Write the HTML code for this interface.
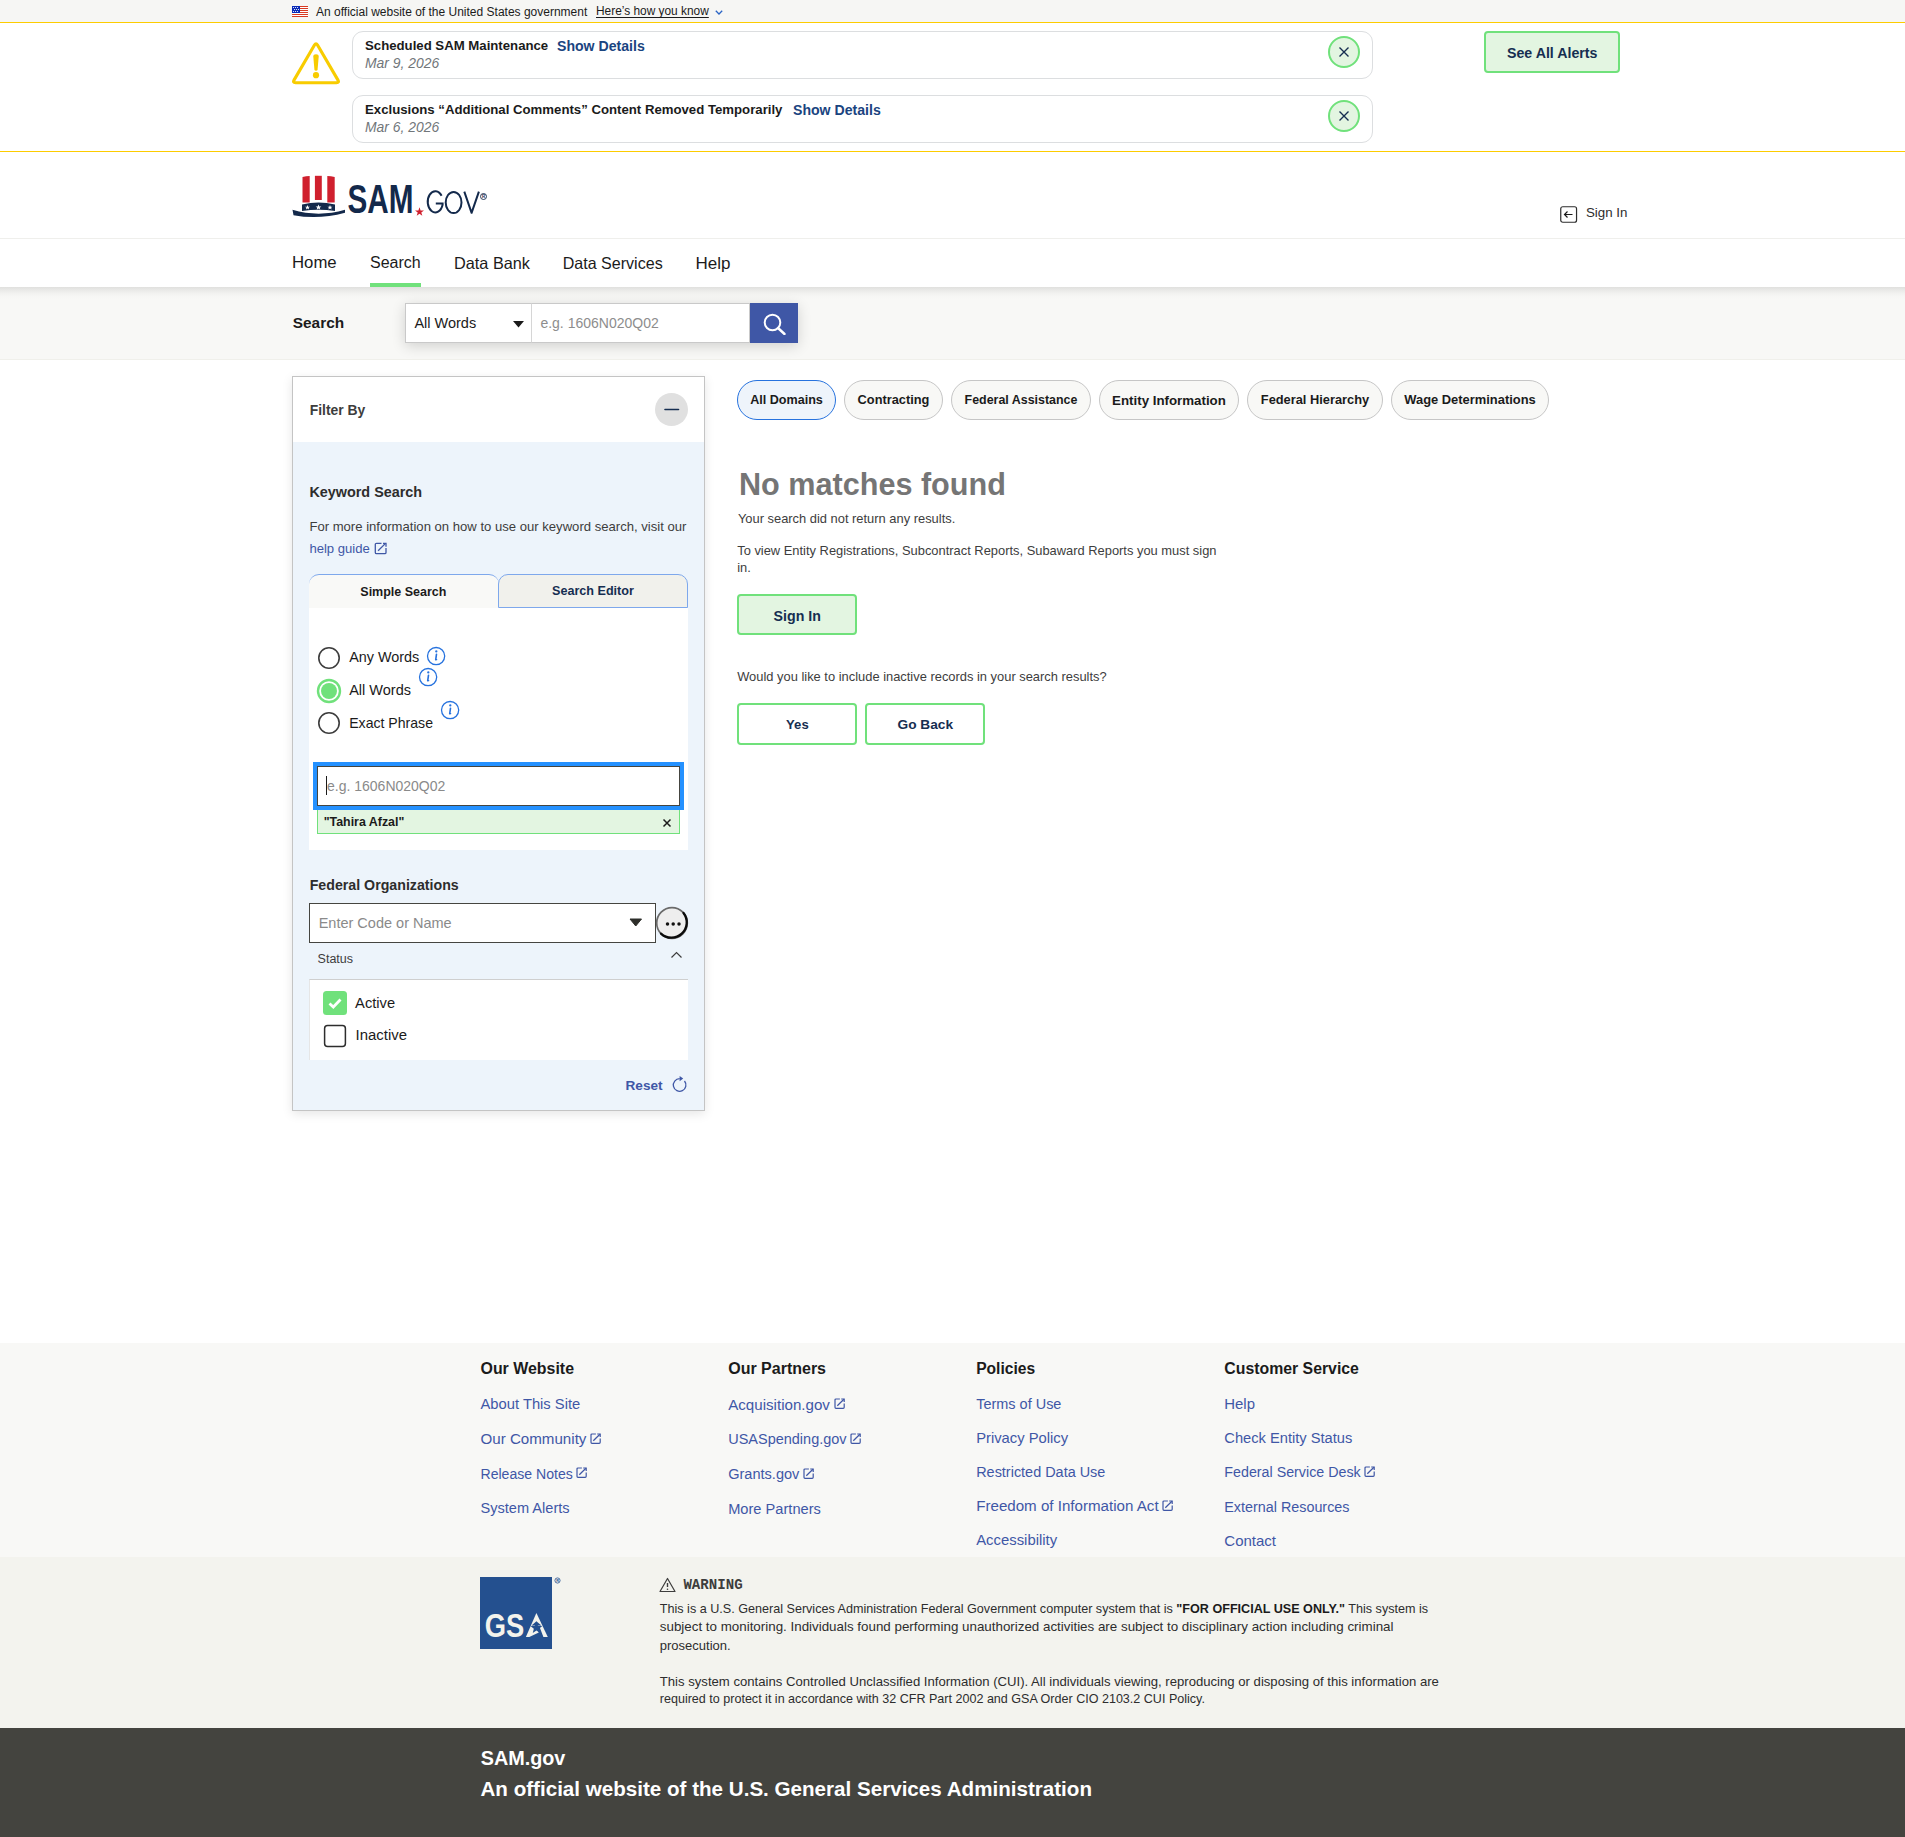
<!DOCTYPE html>
<html><head><meta charset="utf-8"><title>SAM.gov Search</title>
<style>
html,body{margin:0;padding:0;}
body{width:1905px;height:1837px;position:relative;overflow:hidden;background:#fff;font-family:"Liberation Sans",sans-serif;}
.t{position:absolute;white-space:nowrap;line-height:1;}
.r{position:absolute;display:block;}
b{font-weight:700;color:#1b1b1b}
</style></head><body>
<div class="r" style="left:0px;top:0px;width:1905px;height:22px;background:#f6f6f4"></div>
<div class="r" style="left:0px;top:22px;width:1905px;height:1px;background:#fdcc00"></div>
<div class="r" style="left:0px;top:151px;width:1905px;height:1px;background:#fdcc00"></div>
<div class="r" style="left:0px;top:238px;width:1905px;height:1px;background:#efefec"></div>
<div class="r" style="left:0px;top:287px;width:1905px;height:73px;background:linear-gradient(to bottom,#e0e0de 0px,#e9e9e7 3px,#f1f1ef 6px,#f6f6f4 9px,#f8f8f6 13px,#f8f8f6 72px,#f0f0eb 72px)"></div>
<div class="r" style="left:0px;top:1343px;width:1905px;height:214px;background:#f8f8f6"></div>
<div class="r" style="left:0px;top:1557px;width:1905px;height:171px;background:#f3f3ee"></div>
<div class="r" style="left:0px;top:1728px;width:1905px;height:109px;background:#44443f"></div>
<svg class="r" style="left:292px;top:6px;" width="16" height="11" viewBox="0 0 16 11"><rect width="16" height="11" fill="#fff"/><rect y="0" width="16" height="1" fill="#d83a22"/><rect y="2" width="16" height="1" fill="#d83a22"/><rect y="4" width="16" height="1" fill="#d83a22"/><rect y="6" width="16" height="1" fill="#d83a22"/><rect y="8" width="16" height="1" fill="#d83a22"/><rect y="10" width="16" height="1" fill="#d83a22"/><rect width="8" height="7" fill="#0a2bb8"/><circle cx="1.5" cy="1.5" r="0.6" fill="#fff"/><circle cx="3.5" cy="1.5" r="0.6" fill="#fff"/><circle cx="5.5" cy="1.5" r="0.6" fill="#fff"/><circle cx="2.5" cy="3.5" r="0.6" fill="#fff"/><circle cx="4.5" cy="3.5" r="0.6" fill="#fff"/><circle cx="6.5" cy="3.5" r="0.6" fill="#fff"/><circle cx="1.5" cy="5.5" r="0.6" fill="#fff"/><circle cx="3.5" cy="5.5" r="0.6" fill="#fff"/><circle cx="5.5" cy="5.5" r="0.6" fill="#fff"/></svg>
<div class="t " style="left:316.0px;top:6.0px;font-size:12.0px;font-weight:400;color:#1b1b1b;">An official website of the United States government</div>
<div class="t " style="left:596.0px;top:6.0px;font-size:11.9px;font-weight:400;color:#1b1b1b;text-decoration:underline;text-underline-offset:2px">Here’s how you know</div>
<svg class="r" style="left:714px;top:9px;" width="10" height="7" viewBox="0 0 10 7"><path d="M1.8 1.8 L5 5 L8.2 1.8" fill="none" stroke="#2a64c5" stroke-width="1.3"/></svg>
<svg class="r" style="left:291px;top:41px;" width="50" height="44" viewBox="0 0 50 44"><path d="M26.51 4.09 L46.99 39.11 Q48.50 41.70 45.50 41.70 L4.50 41.70 Q1.50 41.70 3.01 39.11 L23.49 4.09 Q25.00 1.50 26.51 4.09 Z" fill="none" stroke="#f8cc00" stroke-width="3.1" stroke-linejoin="round"/><path d="M22.3 15.6 Q22.3 13.2 25 13.2 Q27.7 13.2 27.7 15.6 L26.6 28.6 Q26.4 29.8 25 29.8 Q23.6 29.8 23.4 28.6 Z" fill="#f8cc00"/><circle cx="25" cy="34.2" r="3.1" fill="#f8cc00"/></svg>
<div class="r" style="left:352px;top:31px;width:1021px;height:48px;box-sizing:border-box;border:1px solid #dcdee0;border-radius:11px;background:#fff"></div>
<div class="t " style="left:365.0px;top:39.4px;font-size:13.2px;font-weight:700;color:#1b1b1b;">Scheduled SAM Maintenance</div>
<div class="t " style="left:557.0px;top:38.7px;font-size:14.1px;font-weight:700;color:#1a4480;">Show Details</div>
<div class="t " style="left:365.0px;top:57.3px;font-size:13.9px;font-weight:400;color:#71767a;font-style:italic">Mar 9, 2026</div>
<svg class="r" style="left:1328px;top:36px;" width="32" height="32" viewBox="0 0 32 32"><circle cx="16" cy="16" r="15" fill="#e3f5e1" stroke="#70e17b" stroke-width="2"/><path d="M11.5 11.5 L20.5 20.5 M20.5 11.5 L11.5 20.5" stroke="#162e51" stroke-width="1.4"/></svg>
<div class="r" style="left:352px;top:95px;width:1021px;height:48px;box-sizing:border-box;border:1px solid #dcdee0;border-radius:11px;background:#fff"></div>
<div class="t " style="left:365.0px;top:103.4px;font-size:13.2px;font-weight:700;color:#1b1b1b;">Exclusions “Additional Comments” Content Removed Temporarily</div>
<div class="t " style="left:793.0px;top:102.7px;font-size:14.1px;font-weight:700;color:#1a4480;">Show Details</div>
<div class="t " style="left:365.0px;top:121.3px;font-size:13.9px;font-weight:400;color:#71767a;font-style:italic">Mar 6, 2026</div>
<svg class="r" style="left:1328px;top:100px;" width="32" height="32" viewBox="0 0 32 32"><circle cx="16" cy="16" r="15" fill="#e3f5e1" stroke="#70e17b" stroke-width="2"/><path d="M11.5 11.5 L20.5 20.5 M20.5 11.5 L11.5 20.5" stroke="#162e51" stroke-width="1.4"/></svg>
<div class="r" style="left:1484px;top:31px;width:136px;height:42px;box-sizing:border-box;border:2px solid #70e17b;border-radius:4px;background:#e3f5e1"></div>
<div class="t " style="left:1507.0px;top:45.7px;font-size:14.2px;font-weight:700;color:#162e51;">See All Alerts</div>
<svg class="r" style="left:292px;top:171px;" width="200" height="50" viewBox="0 0 200 50">
<path d="M10.5 6 Q14 5.1 17.7 5 L17.7 31.5 L10.5 31.5 Z" fill="#d0202e"/>
<path d="M22.9 4.8 L29.8 4.8 L29.8 29 L22.9 29 Z" fill="#d0202e"/>
<path d="M35.3 5 Q39 5.1 42.7 6 L42.7 31.5 L35.3 31.5 Z" fill="#d0202e"/>
<path d="M10 33.5 Q26.5 29.5 43 33.5 L43 40 Q26.5 37.5 10 40 Z" fill="#13294b"/>
<path d="M0.5 38.8 Q26.5 46.5 53 38.8 L53 41.8 Q26.5 49 1.5 44.2 Z" fill="#13294b"/>
<polygon points="15.5,34 16.2,35.7 18,35.7 16.6,36.8 17.1,38.5 15.5,37.5 13.9,38.5 14.4,36.8 13,35.7 14.8,35.7" fill="#fff"/>
<polygon points="26.5,33.5 27.3,35.5 29.4,35.5 27.7,36.8 28.3,38.8 26.5,37.6 24.7,38.8 25.3,36.8 23.6,35.5 25.7,35.5" fill="#fff"/>
<polygon points="38,34 38.7,35.7 40.5,35.7 39.1,36.8 39.6,38.5 38,37.5 36.4,38.5 36.9,36.8 35.5,35.7 37.3,35.7" fill="#13294b"/>
<polygon points="38,34 38.7,35.7 40.5,35.7 39.1,36.8 39.6,38.5 38,37.5 36.4,38.5 36.9,36.8 35.5,35.7 37.3,35.7" fill="#fff"/>
<text x="55.5" y="42.3" font-family="Liberation Sans" font-weight="700" font-size="40" fill="#13294b" textLength="66" lengthAdjust="spacingAndGlyphs">SAM</text>
<polygon points="127.5,36.2 128.6,39.5 132,39.5 129.3,41.5 130.3,44.7 127.5,42.7 124.7,44.7 125.7,41.5 123,39.5 126.4,39.5" fill="#d0202e"/>
<path d="M149.6 24.8 A7.6 10.6 0 1 0 150.6 33.8 L150.6 32.6 L143.8 32.6" fill="none" stroke="#13294b" stroke-width="2"/>
<ellipse cx="161.6" cy="31.5" rx="7.9" ry="10.6" fill="none" stroke="#13294b" stroke-width="2"/>
<path d="M172.3 20.6 L179.6 41.8 L186.9 20.6" fill="none" stroke="#13294b" stroke-width="2" stroke-linejoin="round"/>
<circle cx="191.5" cy="25.5" r="3" fill="none" stroke="#13294b" stroke-width="0.9"/><text x="190.1" y="27.1" font-family="Liberation Sans" font-size="4.5" font-weight="700" fill="#13294b">R</text>
</svg>
<svg class="r" style="left:1560px;top:206px;" width="18" height="17" viewBox="0 0 18 17"><rect x="0.75" y="0.75" width="15.8" height="15.5" rx="2" fill="none" stroke="#2d2d2d" stroke-width="1.2"/><path d="M12.5 8.5 L4.5 8.5 M7.5 5.5 L4.5 8.5 L7.5 11.5" fill="none" stroke="#1b1b1b" stroke-width="1.2"/></svg>
<div class="t " style="left:1586.0px;top:206.2px;font-size:13.3px;font-weight:400;color:#2d2d2d;">Sign In</div>
<div class="t " style="left:292.0px;top:254.6px;font-size:16.76px;font-weight:400;color:#1b1b1b;">Home</div>
<div class="t " style="left:370.0px;top:255.0px;font-size:16.0px;font-weight:400;color:#1b1b1b;">Search</div>
<div class="t " style="left:454.0px;top:254.8px;font-size:16.28px;font-weight:400;color:#1b1b1b;">Data Bank</div>
<div class="t " style="left:562.7px;top:254.9px;font-size:16.07px;font-weight:400;color:#1b1b1b;">Data Services</div>
<div class="t " style="left:695.5px;top:254.5px;font-size:17.0px;font-weight:400;color:#1b1b1b;">Help</div>
<div class="r" style="left:370px;top:283px;width:51px;height:4px;background:#70e17b"></div>
<div class="t " style="left:292.8px;top:315.0px;font-size:15.4px;font-weight:700;color:#1b1b1b;">Search</div>
<div class="r" style="left:405px;top:303px;width:393px;height:40px;box-shadow:0 3px 14px rgba(0,0,0,0.16)"></div>
<div class="r" style="left:405px;top:303px;width:127px;height:40px;box-sizing:border-box;border:1px solid #c9c9c9;background:#fff"></div>
<div class="t " style="left:414.4px;top:316.0px;font-size:14.5px;font-weight:400;color:#1b1b1b;">All Words</div>
<svg class="r" style="left:513px;top:321px;" width="11" height="7" viewBox="0 0 11 7"><path d="M0 0 L11 0 L5.5 6.5 Z" fill="#1b1b1b"/></svg>
<div class="r" style="left:531px;top:303px;width:219px;height:40px;box-sizing:border-box;border:1px solid #c9c9c9;border-left:1px solid #d6d6d6;background:#fff"></div>
<div class="t " style="left:540.4px;top:316.2px;font-size:14.0px;font-weight:400;color:#8d8d8d;">e.g. 1606N020Q02</div>
<div class="r" style="left:750px;top:303px;width:48px;height:40px;background:#3f57a6"></div>
<svg class="r" style="left:763px;top:313px;" width="24" height="22" viewBox="0 0 24 22"><circle cx="9.5" cy="9.5" r="7.8" fill="none" stroke="#fff" stroke-width="2"/><path d="M15 15 L21.5 21" stroke="#fff" stroke-width="2.4" stroke-linecap="round"/></svg>
<div class="r" style="left:292px;top:376px;width:413px;height:735px;box-sizing:border-box;border:1px solid #c4c4c4;background:#edf4fb;box-shadow:0 3px 10px rgba(0,0,0,0.10)"></div>
<div class="r" style="left:293px;top:377px;width:411px;height:65px;background:#fff"></div>
<div class="t " style="left:309.7px;top:403.8px;font-size:13.9px;font-weight:700;color:#3d3d3d;">Filter By</div>
<svg class="r" style="left:655px;top:393px;" width="33" height="33" viewBox="0 0 33 33"><circle cx="16.5" cy="16.5" r="16.5" fill="#e0e0e0"/><path d="M10 16.5 L23.5 16.5" stroke="#162e51" stroke-width="1.6" stroke-linecap="round"/></svg>
<div class="t " style="left:309.4px;top:485.4px;font-size:14.4px;font-weight:700;color:#2d2d2d;">Keyword Search</div>
<div class="t " style="left:309.4px;top:519.9px;font-size:13.1px;font-weight:400;color:#3d3d3d;">For more information on how to use our keyword search, visit our</div>
<div class="t " style="left:309.4px;top:541.7px;font-size:13.1px;font-weight:400;color:#3f57a6;">help guide</div>
<svg class="r" style="left:374px;top:542px;" width="14" height="13" viewBox="0 0 14 13"><g transform="translate(0.5,0.5)"><path d="M7 0.8 L2 0.8 Q0.8 0.8 0.8 2 L0.8 10 Q0.8 11.2 2 11.2 L10.3 11.2 Q11.5 11.2 11.5 10 L11.5 5.6" fill="none" stroke="#3f57a6" stroke-width="1.3"/><path d="M8.5 0.8 L11.5 0.8 L11.5 4.2" fill="none" stroke="#3f57a6" stroke-width="1.3"/><path d="M3.6 8.3 L11 0.9" fill="none" stroke="#3f57a6" stroke-width="1.3"/></g></svg>
<div class="r" style="left:309px;top:574px;width:190px;height:34px;box-sizing:border-box;border-top:1px solid #7ea8ec;border-radius:10px 10px 0 0;background:#f9f9f7"></div>
<div class="r" style="left:498px;top:574px;width:190px;height:34px;box-sizing:border-box;border:1px solid #7ea8ec;border-radius:10px 10px 0 0;background:#f1f1ec"></div>
<div class="t " style="left:360.3px;top:585.9px;font-size:12.5px;font-weight:700;color:#1b1b1b;">Simple Search</div>
<div class="t " style="left:552.0px;top:585.2px;font-size:12.6px;font-weight:700;color:#162e51;">Search Editor</div>
<div class="r" style="left:309px;top:608px;width:379px;height:242px;background:#fff"></div>
<svg class="r" style="left:317px;top:646px;" width="24" height="24" viewBox="0 0 24 24"><circle cx="12" cy="12" r="10.2" fill="#fff" stroke="#3d3d3d" stroke-width="1.6"/></svg>
<svg class="r" style="left:316px;top:678px;" width="26" height="26" viewBox="0 0 26 26"><circle cx="13" cy="13" r="11" fill="#fff" stroke="#70e17b" stroke-width="2.4"/><circle cx="13" cy="13" r="8" fill="#70e17b"/></svg>
<svg class="r" style="left:317px;top:711px;" width="24" height="24" viewBox="0 0 24 24"><circle cx="12" cy="12" r="10.2" fill="#fff" stroke="#3d3d3d" stroke-width="1.6"/></svg>
<div class="t " style="left:349.2px;top:650.1px;font-size:14.4px;font-weight:400;color:#1b1b1b;">Any Words</div>
<div class="t " style="left:349.2px;top:683.1px;font-size:14.5px;font-weight:400;color:#1b1b1b;">All Words</div>
<div class="t " style="left:349.2px;top:716.3px;font-size:14.1px;font-weight:400;color:#1b1b1b;">Exact Phrase</div>
<svg class="r" style="left:426px;top:646px;" width="20" height="20" viewBox="0 0 20 20"><circle cx="10.1" cy="10.1" r="8.6" fill="none" stroke="#2672de" stroke-width="1.3"/><circle cx="10.3" cy="5.4" r="1.15" fill="#2672de"/><path d="M10.5 8.2 L9.7 13.8 L10.5 13.5" fill="none" stroke="#2672de" stroke-width="1.6" stroke-linecap="round" stroke-linejoin="round"/></svg>
<svg class="r" style="left:418px;top:667px;" width="20" height="20" viewBox="0 0 20 20"><circle cx="10.1" cy="10.1" r="8.6" fill="none" stroke="#2672de" stroke-width="1.3"/><circle cx="10.3" cy="5.4" r="1.15" fill="#2672de"/><path d="M10.5 8.2 L9.7 13.8 L10.5 13.5" fill="none" stroke="#2672de" stroke-width="1.6" stroke-linecap="round" stroke-linejoin="round"/></svg>
<svg class="r" style="left:440px;top:700px;" width="20" height="20" viewBox="0 0 20 20"><circle cx="10.1" cy="10.1" r="8.6" fill="none" stroke="#2672de" stroke-width="1.3"/><circle cx="10.3" cy="5.4" r="1.15" fill="#2672de"/><path d="M10.5 8.2 L9.7 13.8 L10.5 13.5" fill="none" stroke="#2672de" stroke-width="1.6" stroke-linecap="round" stroke-linejoin="round"/></svg>
<div class="r" style="left:313px;top:762px;width:371px;height:48px;background:#2491ff"></div>
<div class="r" style="left:317px;top:766px;width:363px;height:40px;box-sizing:border-box;border:1.5px solid #454540;background:#fff"></div>
<div class="r" style="left:326px;top:776px;width:1.3px;height:19px;background:#1b1b1b"></div>
<div class="t " style="left:327.0px;top:779.4px;font-size:14.0px;font-weight:400;color:#8a8a8a;">e.g. 1606N020Q02</div>
<div class="r" style="left:317px;top:810px;width:363px;height:24px;box-sizing:border-box;border:1px solid #70e17b;border-top:none;background:#e3f5e1"></div>
<div class="t " style="left:323.7px;top:816.0px;font-size:12.4px;font-weight:700;color:#1b1b1b;">&quot;Tahira Afzal&quot;</div>
<svg class="r" style="left:662px;top:818px;" width="10" height="10" viewBox="0 0 10 10"><path d="M1.5 1.5 L8.5 8.5 M8.5 1.5 L1.5 8.5" stroke="#1b1b1b" stroke-width="1.5"/></svg>
<div class="t " style="left:309.7px;top:877.8px;font-size:14.2px;font-weight:700;color:#2d2d2d;">Federal Organizations</div>
<div class="r" style="left:309px;top:903px;width:347px;height:40px;box-sizing:border-box;border:1.5px solid #454540;background:#fff"></div>
<div class="t " style="left:318.7px;top:916.1px;font-size:14.5px;font-weight:400;color:#8a8a8a;">Enter Code or Name</div>
<svg class="r" style="left:629px;top:918px;" width="14" height="10" viewBox="0 0 14 10"><path d="M1 1 L12.5 1 L6.75 8 Z" fill="#2d2e2a" stroke="#2d2e2a" stroke-width="1" stroke-linejoin="round"/></svg>
<svg class="r" style="left:655px;top:906px;" width="34" height="34" viewBox="0 0 34 34"><circle cx="17" cy="17" r="15.3" fill="#eeeeee" stroke="#6a6a6a" stroke-width="1.7"/><path d="M28.5 7 A15.3 15.3 0 0 1 6 27.6" fill="none" stroke="#0b0b0b" stroke-width="2.3" stroke-linecap="round"/><circle cx="12.5" cy="18.1" r="1.75" fill="#111"/><circle cx="18.2" cy="18.1" r="1.75" fill="#111"/><circle cx="24" cy="18.1" r="1.75" fill="#111"/></svg>
<div class="t " style="left:317.6px;top:953.1px;font-size:12.5px;font-weight:400;color:#3d3d3d;">Status</div>
<svg class="r" style="left:670px;top:950px;" width="13" height="9" viewBox="0 0 13 9"><path d="M1.5 7.5 L6.5 2.5 L11.5 7.5" fill="none" stroke="#3d3d3d" stroke-width="1.2"/></svg>
<div class="r" style="left:309px;top:979px;width:379px;height:81px;box-sizing:border-box;border-top:1px solid #cfcfcf;border-left:1px solid #e6e6e6;background:#fff"></div>
<svg class="r" style="left:323px;top:991px;" width="24" height="24" viewBox="0 0 24 24"><rect x="0" y="0" width="24" height="24" rx="3.5" fill="#70e17b"/><path d="M6.5 12.5 L10.3 16 L17.5 8.5" fill="none" stroke="#fff" stroke-width="2.8"/></svg>
<svg class="r" style="left:323px;top:1024px;" width="24" height="24" viewBox="0 0 24 24"><rect x="1.6" y="1.6" width="20.8" height="20.8" rx="3" fill="#fff" stroke="#2d2d2d" stroke-width="1.5"/></svg>
<div class="t " style="left:355.1px;top:996.1px;font-size:14.7px;font-weight:400;color:#1b1b1b;">Active</div>
<div class="t " style="left:355.6px;top:1028.2px;font-size:14.9px;font-weight:400;color:#1b1b1b;">Inactive</div>
<div class="t " style="left:625.5px;top:1079.0px;font-size:13.6px;font-weight:700;color:#3f57a6;">Reset</div>
<svg class="r" style="left:671px;top:1074px;" width="18" height="19" viewBox="0 0 18 19"><path d="M8.7 4.7 A6.3 6.3 0 1 0 13.5 7.0" fill="none" stroke="#3f57a6" stroke-width="1.3"/><path d="M8.6 2 L12.2 4.6 L8.6 7.2 Z" fill="#3f57a6"/></svg>
<div class="r" style="left:737px;top:380px;width:99px;height:40px;box-sizing:border-box;border-radius:20px;border:1px solid #2672de;background:#eef4fb"></div>
<div class="t" style="left:737px;width:99px;text-align:center;top:394.1px;font-size:12.58px;font-weight:700;color:#1b1b1b">All Domains</div>
<div class="r" style="left:844px;top:380px;width:99px;height:40px;box-sizing:border-box;border-radius:20px;border:1px solid #c6c6c6;background:#f8f8f6"></div>
<div class="t" style="left:844px;width:99px;text-align:center;top:394.0px;font-size:12.8px;font-weight:700;color:#1b1b1b">Contracting</div>
<div class="r" style="left:951px;top:380px;width:140px;height:40px;box-sizing:border-box;border-radius:20px;border:1px solid #c6c6c6;background:#f8f8f6"></div>
<div class="t" style="left:951px;width:140px;text-align:center;top:394.2px;font-size:12.43px;font-weight:700;color:#1b1b1b">Federal Assistance</div>
<div class="r" style="left:1099px;top:380px;width:140px;height:40px;box-sizing:border-box;border-radius:20px;border:1px solid #c6c6c6;background:#f8f8f6"></div>
<div class="t" style="left:1099px;width:140px;text-align:center;top:393.7px;font-size:13.3px;font-weight:700;color:#1b1b1b">Entity Information</div>
<div class="r" style="left:1247px;top:380px;width:136px;height:40px;box-sizing:border-box;border-radius:20px;border:1px solid #c6c6c6;background:#f8f8f6"></div>
<div class="t" style="left:1247px;width:136px;text-align:center;top:393.9px;font-size:12.84px;font-weight:700;color:#1b1b1b">Federal Hierarchy</div>
<div class="r" style="left:1391px;top:380px;width:158px;height:40px;box-sizing:border-box;border-radius:20px;border:1px solid #c6c6c6;background:#f8f8f6"></div>
<div class="t" style="left:1391px;width:158px;text-align:center;top:393.9px;font-size:12.91px;font-weight:700;color:#1b1b1b">Wage Determinations</div>
<div class="t " style="left:739.0px;top:468.5px;font-size:30.6px;font-weight:700;color:#757575;">No matches found</div>
<div class="t " style="left:737.9px;top:513.1px;font-size:12.9px;font-weight:400;color:#3d3d3d;">Your search did not return any results.</div>
<div class="t " style="left:737.2px;top:544.8px;font-size:12.9px;font-weight:400;color:#3d3d3d;">To view Entity Registrations, Subcontract Reports, Subaward Reports you must sign</div>
<div class="t " style="left:737.2px;top:562.4px;font-size:12.9px;font-weight:400;color:#3d3d3d;">in.</div>
<div class="r" style="left:737px;top:594px;width:120px;height:41px;box-sizing:border-box;border:2px solid #70e17b;border-radius:4px;background:#e3f5e1"></div>
<div class="t " style="left:773.6px;top:608.5px;font-size:14.2px;font-weight:700;color:#162e51;">Sign In</div>
<div class="t " style="left:737.2px;top:671.0px;font-size:12.9px;font-weight:400;color:#3d3d3d;">Would you like to include inactive records in your search results?</div>
<div class="r" style="left:737px;top:703px;width:120px;height:42px;box-sizing:border-box;border:2px solid #70e17b;border-radius:4px;background:#fff"></div>
<div class="r" style="left:865px;top:703px;width:120px;height:42px;box-sizing:border-box;border:2px solid #70e17b;border-radius:4px;background:#fff"></div>
<div class="t " style="left:786.1px;top:718.4px;font-size:13.1px;font-weight:700;color:#162e51;">Yes</div>
<div class="t " style="left:897.5px;top:718.1px;font-size:13.7px;font-weight:700;color:#162e51;">Go Back</div>
<div class="t " style="left:480.5px;top:1360.8px;font-size:15.93px;font-weight:700;color:#1b1b1b;">Our Website</div>
<div class="t " style="left:480.5px;top:1396.8px;font-size:14.76px;font-weight:400;color:#3f57a6;">About This Site</div>
<div class="t " style="left:480.5px;top:1431.1px;font-size:15.14px;font-weight:400;color:#3f57a6;">Our Community</div>
<svg class="r" style="left:590.0px;top:1432.5px" width="11" height="11" viewBox="0 0 11 11"><g transform="translate(0.3,0.3)"><path d="M5.6 0.7 L1.7 0.7 Q0.7 0.7 0.7 1.7 L0.7 9 Q0.7 10 1.7 10 L8.9 10 Q9.9 10 9.9 9 L9.9 5.2" fill="none" stroke="#3f57a6" stroke-width="1.2"/><path d="M6.9 0.7 L9.9 0.7 L9.9 3.7" fill="none" stroke="#3f57a6" stroke-width="1.2"/><path d="M3 7.4 L9.6 0.9" fill="none" stroke="#3f57a6" stroke-width="1.2"/></g></svg>
<div class="t " style="left:480.5px;top:1466.5px;font-size:14.09px;font-weight:400;color:#3f57a6;">Release Notes</div>
<svg class="r" style="left:576.4px;top:1467.3px" width="11" height="11" viewBox="0 0 11 11"><g transform="translate(0.3,0.3)"><path d="M5.6 0.7 L1.7 0.7 Q0.7 0.7 0.7 1.7 L0.7 9 Q0.7 10 1.7 10 L8.9 10 Q9.9 10 9.9 9 L9.9 5.2" fill="none" stroke="#3f57a6" stroke-width="1.2"/><path d="M6.9 0.7 L9.9 0.7 L9.9 3.7" fill="none" stroke="#3f57a6" stroke-width="1.2"/><path d="M3 7.4 L9.6 0.9" fill="none" stroke="#3f57a6" stroke-width="1.2"/></g></svg>
<div class="t " style="left:480.5px;top:1501.4px;font-size:14.59px;font-weight:400;color:#3f57a6;">System Alerts</div>
<div class="t " style="left:728.2px;top:1360.8px;font-size:16.0px;font-weight:700;color:#1b1b1b;">Our Partners</div>
<div class="t " style="left:728.2px;top:1396.6px;font-size:15.14px;font-weight:400;color:#3f57a6;">Acquisition.gov</div>
<svg class="r" style="left:833.5px;top:1398.0px" width="11" height="11" viewBox="0 0 11 11"><g transform="translate(0.3,0.3)"><path d="M5.6 0.7 L1.7 0.7 Q0.7 0.7 0.7 1.7 L0.7 9 Q0.7 10 1.7 10 L8.9 10 Q9.9 10 9.9 9 L9.9 5.2" fill="none" stroke="#3f57a6" stroke-width="1.2"/><path d="M6.9 0.7 L9.9 0.7 L9.9 3.7" fill="none" stroke="#3f57a6" stroke-width="1.2"/><path d="M3 7.4 L9.6 0.9" fill="none" stroke="#3f57a6" stroke-width="1.2"/></g></svg>
<div class="t " style="left:728.2px;top:1432.0px;font-size:14.49px;font-weight:400;color:#3f57a6;">USASpending.gov</div>
<svg class="r" style="left:850.1px;top:1433.0px" width="11" height="11" viewBox="0 0 11 11"><g transform="translate(0.3,0.3)"><path d="M5.6 0.7 L1.7 0.7 Q0.7 0.7 0.7 1.7 L0.7 9 Q0.7 10 1.7 10 L8.9 10 Q9.9 10 9.9 9 L9.9 5.2" fill="none" stroke="#3f57a6" stroke-width="1.2"/><path d="M6.9 0.7 L9.9 0.7 L9.9 3.7" fill="none" stroke="#3f57a6" stroke-width="1.2"/><path d="M3 7.4 L9.6 0.9" fill="none" stroke="#3f57a6" stroke-width="1.2"/></g></svg>
<div class="t " style="left:728.2px;top:1466.9px;font-size:14.56px;font-weight:400;color:#3f57a6;">Grants.gov</div>
<svg class="r" style="left:802.9px;top:1468.0px" width="11" height="11" viewBox="0 0 11 11"><g transform="translate(0.3,0.3)"><path d="M5.6 0.7 L1.7 0.7 Q0.7 0.7 0.7 1.7 L0.7 9 Q0.7 10 1.7 10 L8.9 10 Q9.9 10 9.9 9 L9.9 5.2" fill="none" stroke="#3f57a6" stroke-width="1.2"/><path d="M6.9 0.7 L9.9 0.7 L9.9 3.7" fill="none" stroke="#3f57a6" stroke-width="1.2"/><path d="M3 7.4 L9.6 0.9" fill="none" stroke="#3f57a6" stroke-width="1.2"/></g></svg>
<div class="t " style="left:728.2px;top:1501.9px;font-size:14.63px;font-weight:400;color:#3f57a6;">More Partners</div>
<div class="t " style="left:976.2px;top:1361.0px;font-size:15.6px;font-weight:700;color:#1b1b1b;">Policies</div>
<div class="t " style="left:976.2px;top:1397.3px;font-size:14.48px;font-weight:400;color:#3f57a6;">Terms of Use</div>
<div class="t " style="left:976.2px;top:1431.2px;font-size:14.77px;font-weight:400;color:#3f57a6;">Privacy Policy</div>
<div class="t " style="left:976.2px;top:1464.5px;font-size:14.44px;font-weight:400;color:#3f57a6;">Restricted Data Use</div>
<div class="t " style="left:976.2px;top:1498.1px;font-size:15.13px;font-weight:400;color:#3f57a6;">Freedom of Information Act</div>
<svg class="r" style="left:1162.2px;top:1499.5px" width="11" height="11" viewBox="0 0 11 11"><g transform="translate(0.3,0.3)"><path d="M5.6 0.7 L1.7 0.7 Q0.7 0.7 0.7 1.7 L0.7 9 Q0.7 10 1.7 10 L8.9 10 Q9.9 10 9.9 9 L9.9 5.2" fill="none" stroke="#3f57a6" stroke-width="1.2"/><path d="M6.9 0.7 L9.9 0.7 L9.9 3.7" fill="none" stroke="#3f57a6" stroke-width="1.2"/><path d="M3 7.4 L9.6 0.9" fill="none" stroke="#3f57a6" stroke-width="1.2"/></g></svg>
<div class="t " style="left:976.2px;top:1533.0px;font-size:14.86px;font-weight:400;color:#3f57a6;">Accessibility</div>
<div class="t " style="left:1224.3px;top:1360.9px;font-size:15.83px;font-weight:700;color:#1b1b1b;">Customer Service</div>
<div class="t " style="left:1224.3px;top:1397.0px;font-size:14.93px;font-weight:400;color:#3f57a6;">Help</div>
<div class="t " style="left:1224.3px;top:1431.4px;font-size:14.68px;font-weight:400;color:#3f57a6;">Check Entity Status</div>
<div class="t " style="left:1224.3px;top:1464.6px;font-size:14.28px;font-weight:400;color:#3f57a6;">Federal Service Desk</div>
<svg class="r" style="left:1364.3px;top:1465.5px" width="11" height="11" viewBox="0 0 11 11"><g transform="translate(0.3,0.3)"><path d="M5.6 0.7 L1.7 0.7 Q0.7 0.7 0.7 1.7 L0.7 9 Q0.7 10 1.7 10 L8.9 10 Q9.9 10 9.9 9 L9.9 5.2" fill="none" stroke="#3f57a6" stroke-width="1.2"/><path d="M6.9 0.7 L9.9 0.7 L9.9 3.7" fill="none" stroke="#3f57a6" stroke-width="1.2"/><path d="M3 7.4 L9.6 0.9" fill="none" stroke="#3f57a6" stroke-width="1.2"/></g></svg>
<div class="t " style="left:1224.3px;top:1499.5px;font-size:14.35px;font-weight:400;color:#3f57a6;">External Resources</div>
<div class="t " style="left:1224.3px;top:1532.9px;font-size:15.0px;font-weight:400;color:#3f57a6;">Contact</div>
<svg class="r" style="left:480px;top:1577px;" width="82" height="72" viewBox="0 0 82 72"><rect x="0" y="0" width="72" height="72" fill="#24508f"/><text x="4.8" y="59.8" font-family="Liberation Sans" font-weight="700" font-size="33" fill="#f3f3ec" textLength="39.5" lengthAdjust="spacingAndGlyphs">GS</text><polygon points="56.4,36 67.8,59.9 45.9,59.9" fill="#f3f3ec"/><polygon points="56.4,44.3 51.6,48.6 61.4,48.6" fill="#24508f"/><polygon points="56.40,44.70 57.99,48.72 62.30,48.98 58.97,51.73 60.04,55.92 56.40,53.60 52.76,55.92 53.83,51.73 50.50,48.98 54.81,48.72" fill="#24508f"/><polygon points="59.6,50 63.4,59.95 49.3,59.95 58.8,55.4 57.6,53.2" fill="#24508f"/><circle cx="77.5" cy="3.5" r="2.6" fill="none" stroke="#24508f" stroke-width="0.8"/><text x="76.3" y="4.9" font-family="Liberation Sans" font-size="3.8" font-weight="700" fill="#24508f">R</text></svg>
<svg class="r" style="left:659px;top:1577px;" width="17" height="16" viewBox="0 0 17 16"><path d="M8.5 1.5 L16 14.5 L1 14.5 Z" fill="none" stroke="#3d3d3d" stroke-width="1.2" stroke-linejoin="round"/><path d="M8.5 6 L8.5 10" stroke="#3d3d3d" stroke-width="1.4"/><circle cx="8.5" cy="12.2" r="0.8" fill="#3d3d3d"/></svg>
<div class="t " style="left:683.4px;top:1578.3px;font-size:14.1px;font-weight:700;color:#3d3d3d;font-family:'Liberation Mono', monospace;">WARNING</div>
<div class="t " style="left:659.8px;top:1603.0px;font-size:12.6px;font-weight:400;color:#2d2d2d;">This is a U.S. General Services Administration Federal Government computer system that is <b>"FOR OFFICIAL USE ONLY."</b> This system is</div>
<div class="t " style="left:659.8px;top:1620.3px;font-size:13.36px;font-weight:400;color:#2d2d2d;">subject to monitoring. Individuals found performing unauthorized activities are subject to disciplinary action including criminal</div>
<div class="t " style="left:659.8px;top:1638.7px;font-size:13.0px;font-weight:400;color:#2d2d2d;">prosecution.</div>
<div class="t " style="left:659.8px;top:1674.5px;font-size:13.13px;font-weight:400;color:#2d2d2d;">This system contains Controlled Unclassified Information (CUI). All individuals viewing, reproducing or disposing of this information are</div>
<div class="t " style="left:659.8px;top:1692.9px;font-size:12.56px;font-weight:400;color:#2d2d2d;">required to protect it in accordance with 32 CFR Part 2002 and GSA Order CIO 2103.2 CUI Policy.</div>
<div class="t " style="left:480.7px;top:1749.0px;font-size:19.8px;font-weight:700;color:#ffffff;">SAM.gov</div>
<div class="t " style="left:480.5px;top:1779.3px;font-size:20.6px;font-weight:700;color:#ffffff;">An official website of the U.S. General Services Administration</div>
</body></html>
